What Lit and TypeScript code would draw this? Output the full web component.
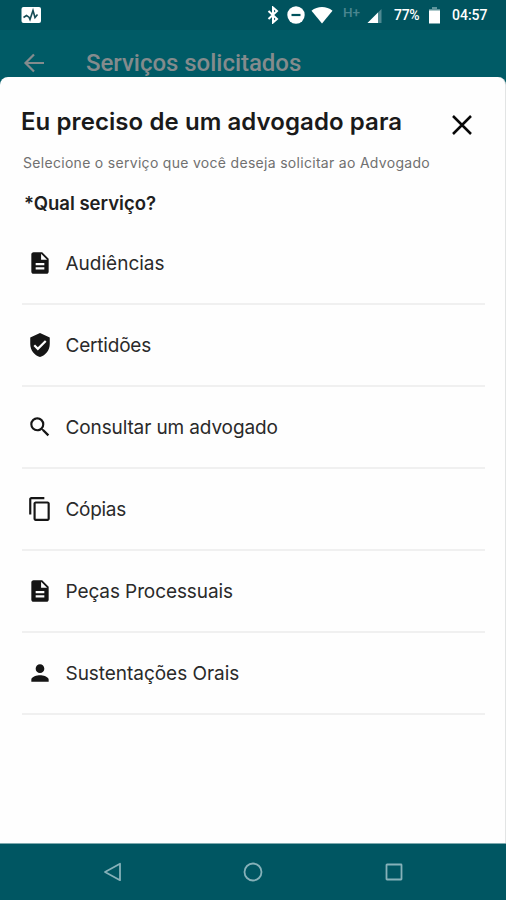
import { LitElement, html, css, svg } from "lit";
import { customElement, property } from "lit/decorators.js";

type IconName = "document" | "shield" | "search" | "copy" | "person";

interface Service {
  icon: IconName;
  label: string;
  spacing: number;
}

const SERVICES: Service[] = [
  { icon: "document", label: "Audiências", spacing: 0 },
  { icon: "shield", label: "Certidões", spacing: -0.2 },
  { icon: "search", label: "Consultar um advogado", spacing: -0.12 },
  { icon: "copy", label: "Cópias", spacing: -0.3 },
  { icon: "document", label: "Peças Processuais", spacing: -0.1 },
  { icon: "person", label: "Sustentações Orais", spacing: -0.04 },
];

const ICONS = {
  document: svg`<path fill-rule="evenodd" d="M14 2H6c-1.1 0-2 .9-2 2v16c0 1.1.9 2 2 2h12c1.1 0 2-.9 2-2V8l-6-6zm2 16H8v-2h8v2zm0-4H8v-2h8v2zm-3-5V3.500L18.500 9H13z"/>`,
  shield: svg`<path d="M12 1 3 5v6c0 5.550 3.840 10.740 9 12 5.160-1.260 9-6.450 9-12V5l-9-4zm-2 16-4-4 1.410-1.410L10 14.170l6.590-6.590L18 9l-8 8z"/>`,
  search: svg`<path d="M15.500 14h-.79l-.28-.27A6.471 6.471 0 0 0 16 9.500 6.500 6.500 0 1 0 9.500 16c1.610 0 3.090-.59 4.230-1.570l.27.28v.79l5 4.990L20.490 19l-4.990-5zm-6 0C7.010 14 5 11.990 5 9.500S7.010 5 9.500 5 14 7.010 14 9.500 11.990 14 9.500 14z"/>`,
  copy: svg`<path d="M16 1H4c-1.100 0-2 .9-2 2v14h2V3h12V1zm3 4H8c-1.100 0-2 .9-2 2v14c0 1.100.9 2 2 2h11c1.100 0 2-.9 2-2V7c0-1.100-.9-2-2-2zm0 16H8V7h11v14z"/>`,
  person: svg`<path d="M12 12c2.210 0 4-1.790 4-4s-1.790-4-4-4-4 1.790-4 4 1.790 4 4 4zm0 2c-2.670 0-8 1.340-8 4v2h16v-2c0-2.660-5.330-4-8-4z"/>`,
};

@customElement("status-bar")
class StatusBar extends LitElement {
  static styles = css`
    :host { display: flex; align-items: center; height: 30px; padding: 0 18px 0 21px; background: #00535e; color: #fff;
      font: 500 14px Roboto, sans-serif; box-sizing: border-box; }
    svg { display: block; flex: none; }
    .grow { flex: 1; }
    .dim { width: 18px; margin: 0 6px 7px 10px; font-size: 13.500px; line-height: 14px; color: #4a8690; white-space: nowrap; }
    .pct { width: 27px; margin-left: 12px; letter-spacing: -0.3px; white-space: nowrap; }
    .clock { width: 36px; margin-left: 12px; letter-spacing: 0; white-space: nowrap; }
    .bt { margin-left: 0; }
    .dnd { margin-left: 8px; }
    .wifi { margin-left: 6px; }
    .batt { margin-left: 8px; }
  `;

  render() {
    return html`
      <svg width="21" height="18" viewBox="0 0 21 18"><rect x=".5" y="1" width="19.500" height="16" rx="2" fill="#fff" />
        <path d="M2.500 11.500 5.500 9.500 8 11.200 9 13.500 12 4.500 14 11.500 16.500 8.500" fill="none" stroke="#164b55" stroke-width="1.600" /></svg>
      <span class="grow"></span>
      <svg class="bt" width="12" height="18" viewBox="0 0 12 18"><path d="M1.500 5l8.500 8-4 3.500v-15l4 3.500-8.500 8" fill="none" stroke="#fff" stroke-width="2" /></svg>
      <svg class="dnd" width="18" height="18" viewBox="0 0 18 18"><circle cx="9" cy="9" r="8.700" fill="#fff" /><path d="M4.500 9h9" stroke="#00525d" stroke-width="2.200" /></svg>
      <svg class="wifi" width="22" height="18" viewBox="0 0 22 18"><path d="M.5 4.800C6.500-.2 15.500-.2 21.500 4.800L11 17.500z" fill="#fff" /></svg>
      <span class="dim">H+</span>
      <svg width="15" height="18" viewBox="0 0 15 18"><path d="M14.500 3v14H.5z" fill="#4f8991" /><path d="M11 6.500V17H.5z" fill="#fff" /></svg>
      <span class="pct">77%</span>
      <svg class="batt" width="11" height="18" viewBox="0 0 11 18"><path d="M3 1h5v2h3v3H0V3h3z" fill="#5f959c" /><path d="M0 4.500h11V17.500H0z" fill="#fff" /></svg>
      <span class="clock">04:57</span>
    `;
  }
}

@customElement("service-row")
class ServiceRow extends LitElement {
  @property({ attribute: false }) service!: Service;

  static styles = css`
    :host { display: flex; align-items: center; height: 82px; border-bottom: 2px solid #f0f0f0; box-sizing: border-box;
      padding-left: 5px; gap: 12.500px; color: #2a2a2a; }
    svg { display: block; width: 26px; height: 26px; flex: none; fill: #151515; }
    .label { padding-top: 2px; font: 400 19px/24px Inter, sans-serif; white-space: nowrap; }
  `;

  render() {
    return html`
      <svg viewBox="0 0 24 24">${ICONS[this.service.icon]}</svg>
      <span class="label" style="letter-spacing:${this.service.spacing}px">${this.service.label}</span>
    `;
  }
}

@customElement("nav-bar")
class NavBar extends LitElement {
  static styles = css`
    :host { display: grid; grid-template-columns: repeat(3, 140.500px); justify-content: center; align-items: center;
      justify-items: center; height: 57px; background: #005662; border-top: 1px solid #7da9ae; box-sizing: border-box; }
    svg { display: block; fill: none; stroke: #86b1b9; stroke-width: 1.800; }
  `;

  render() {
    return html`
      <svg width="20" height="20" viewBox="0 0 20 20"><path d="M2 10 17 1.800v16.400z" stroke-linejoin="round" /></svg>
      <svg width="20" height="20" viewBox="0 0 20 20"><circle cx="10" cy="10" r="8.500" /></svg>
      <svg width="20" height="20" viewBox="0 0 20 20"><rect x="2.500" y="2.500" width="15" height="15" rx=".5" /></svg>
    `;
  }
}

@customElement("app-root")
class AppRoot extends LitElement {
  static styles = css`
    :host { display: flex; flex-direction: column; height: 900px; background: #005b66; overflow: hidden; }
    .appbar { display: flex; align-items: center; height: 47px; padding: 19px 0 0 23px; box-sizing: border-box; gap: 41px; color: #848b8d; }
    .appbar svg { display: block; }
    .screen { font: 500 24px/28px Roboto, sans-serif; white-space: nowrap; letter-spacing: -0.03px; }
    .sheet { flex: 1; background: #fefefe; border-radius: 8px 8px 0 0; padding: 0 20px 0 22px; border-right: 1px solid #e2e4e4; }
    .head { display: flex; justify-content: space-between; height: 70px; padding-right: 13px; }
    .title { margin: 30px 0 0 -1px; font: 600 24px/30px Inter, sans-serif; letter-spacing: 0.08px; color: #1a1a1a; white-space: nowrap; }
    .close { display: block; margin-top: 38px; }
    .hint { margin: 7px 0 0 1px; font: 400 14px/18px Inter, sans-serif; letter-spacing: 0.3px; color: #707070; white-space: nowrap; }
    .question { margin: 18px 0 0 2px; font: 600 18.500px/26px Inter, sans-serif; color: #202020; white-space: nowrap; }
    .list { margin-top: 7px; }
  `;

  render() {
    return html`
      <status-bar></status-bar>
      <div class="appbar">
        <svg width="22" height="20" viewBox="0 0 22 20"><path d="M21 10H2.500M11 1.500 2.500 10l8.500 8.500" fill="none" stroke="currentColor" stroke-width="2.200" /></svg>
        <span class="screen">Serviços solicitados</span>
      </div>
      <main class="sheet">
        <div class="head">
          <h1 class="title">Eu preciso de um advogado para</h1>
          <svg class="close" width="20" height="20" viewBox="0 0 20 20"><path d="M1 1 19 19M19 1 1 19" stroke="#080808" stroke-width="2.500" /></svg>
        </div>
        <p class="hint">Selecione o serviço que você deseja solicitar ao Advogado</p>
        <h2 class="question">*Qual serviço?</h2>
        <div class="list">${SERVICES.map((s) => html`<service-row .service=${s}></service-row>`)}</div>
      </main>
      <nav-bar></nav-bar>
    `;
  }
}
